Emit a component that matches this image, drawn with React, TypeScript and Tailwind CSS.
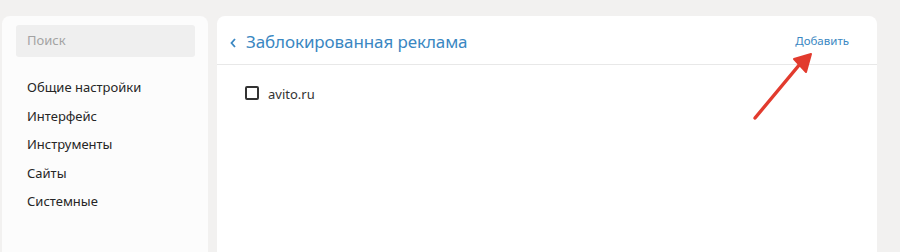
import React from "react";

const menu = ["Общие настройки", "Интерфейс", "Инструменты", "Сайты", "Системные"];

const App: React.FC = () => {
  return (
    <div
      className="relative h-[252px] w-[900px] overflow-hidden bg-[#f2f1f0] pl-[2px] pt-[16px]"
      style={{ fontFamily: "'Noto Sans', 'Open Sans', sans-serif" }}
    >
      <div className="flex h-full gap-[9px]">
        {/* Sidebar */}
        <div className="h-full w-[206px] rounded-t-[8px] bg-[#fcfcfc] px-[14px] pt-[9px]">
          <div className="flex h-[32px] w-[179px] items-center rounded-[3px] bg-[#efefef] pl-[11px] text-[13px] text-[#a3a3a3]">
            Поиск
          </div>
          <ul className="mt-[20px] pl-[11px]">
            {menu.map((m) => (
              <li key={m} className="h-[28.6px] text-[13px] leading-[20px] text-[#262626]">
                {m}
              </li>
            ))}
          </ul>
        </div>

        {/* Main */}
        <div className="h-full w-[660px] rounded-t-[8px] bg-white">
          <div className="flex h-[49px] items-center justify-between border-b border-[#e8e8e8] pl-[12px] pr-[28px] pt-[4px]">
            <div className="flex items-center gap-[9px] text-[#3a87c2]">
              <svg width="8" height="12" viewBox="0 0 8 12" className="mt-[1px]">
                <path d="M6 2 L2.5 6 L6 10" fill="none" stroke="#3a87c2" strokeWidth="1.8" />
              </svg>
              <span className="text-[17px] tracking-[-0.1px]">Заблокированная реклама</span>
            </div>
            <span className="mt-[-2px] text-[11.5px] text-[#3a87c2]">Добавить</span>
          </div>
          <div className="flex items-center gap-[9px] pl-[28px] pt-[20px]">
            <span className="mt-[-3px] h-[14px] w-[14px] rounded-[2px] border-[2px] border-[#333]" />
            <span className="text-[13px] text-[#333]">avito.ru</span>
          </div>
        </div>
      </div>

      {/* red arrow annotation */}
      <svg className="absolute left-[748px] top-[48px]" width="70" height="76" viewBox="0 0 70 76">
        <line x1="7" y1="70" x2="52" y2="16" stroke="#e23b2e" strokeWidth="3.5" strokeLinecap="round" />
        <polygon points="63,6 46,11 58,24" fill="#e23b2e" stroke="#e23b2e" strokeWidth="2" strokeLinejoin="round" />
      </svg>
    </div>
  );
};

export default App;
